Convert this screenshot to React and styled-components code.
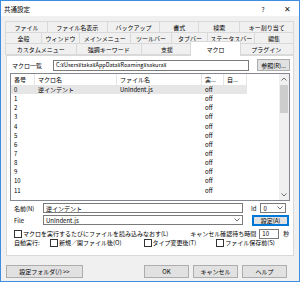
import React from 'react';
import styled, { createGlobalStyle } from 'styled-components';

const Global = createGlobalStyle`
  html, body { margin: 0; padding: 0; background: #f0f0f0; }
  body {
    font-family: "Noto Sans CJK JP", "Noto Sans", sans-serif;
    font-size: 6px;
    color: #000;
  }
`;

const Dialog = styled.div`
  width: 300px;
  height: 282px;
  box-sizing: border-box;
  border: 1px solid #3d8ee0;
  background: #f0f0f0;
  display: flex;
  flex-direction: column;
  overflow: hidden;
`;

const TitleBar = styled.div`
  height: 15px;
  background: #fff;
  display: flex;
  align-items: center;
  padding-left: 3px;
  font-size: 6.5px;
`;

const Title = styled.div`
  flex: 1;
`;

const TitleButton = styled.div`
  width: 24px;
  text-align: center;
  font-size: ${p => p.$size || 7}px;
  color: #222;
`;

const Tabs = styled.div`
  margin: 5px 5px 0;
  display: flex;
  flex-direction: column;
`;

const TabRow = styled.div`
  display: flex;
  height: 12px;
  margin-top: ${p => (p.$first ? 0 : -1)}px;
`;

const Tab = styled.div`
  flex: ${p => p.$w} 1 0;
  box-sizing: border-box;
  border: 1px solid #d9d9d9;
  margin-left: -1px;
  background: ${p => (p.$active ? '#fff' : '#f0f0f0')};
  display: flex;
  align-items: center;
  justify-content: center;
  white-space: nowrap;
  ${p =>
    p.$active &&
    `
    position: relative;
    z-index: 1;
    margin: -2px -2px -1px -3px;
    border-bottom: none;
  `}
`;

const Panel = styled.div`
  margin: 0 5px;
  height: 201px;
  box-sizing: border-box;
  background: #fff;
  border: 1px solid #d9d9d9;
  padding: 3px 3px 0 4px;
  display: flex;
  flex-direction: column;
`;

const Row = styled.div`
  display: flex;
  align-items: center;
  height: ${p => p.$h || 10}px;
  margin-top: ${p => p.$mt || 0}px;
`;

const Label = styled.div`
  width: ${p => p.$w || 'auto'};
  flex: none;
  white-space: nowrap;
  margin-left: ${p => p.$ml || 0}px;
`;

const Field = styled.div`
  box-sizing: border-box;
  height: ${p => p.$h || 10}px;
  width: ${p => p.$w}px;
  margin-left: ${p => p.$ml || 0}px;
  border: 1px solid #7a7a7a;
  background: #fff;
  display: flex;
  align-items: center;
  padding: 0 2px;
  font-size: ${p => p.$fs || 6}px;
  white-space: nowrap;
  overflow: hidden;
`;

const FieldText = styled.div`
  flex: 1;
  overflow: hidden;
`;

const Button = styled.div`
  box-sizing: border-box;
  height: ${p => p.$h || 12}px;
  width: ${p => p.$w}px;
  margin-left: ${p => p.$ml || 0}px;
  border: 1px solid ${p => (p.$default ? '#0078d7' : '#adadad')};
  box-shadow: ${p => (p.$default ? 'inset 0 0 0 1px #0078d7' : 'none')};
  background: #e1e1e1;
  display: flex;
  align-items: center;
  justify-content: center;
  white-space: nowrap;
`;

const List = styled.div`
  margin-top: 2px;
  margin-left: -1px;
  height: 128px;
  box-sizing: border-box;
  border: 1px solid #828790;
  display: flex;
`;

const ListBody = styled.div`
  flex: 1;
  display: flex;
  flex-direction: column;
`;

const HeaderRow = styled.div`
  display: flex;
  height: 11px;
  align-items: stretch;
`;

const HeaderCell = styled.div`
  width: ${p => p.$w}px;
  flex: none;
  box-sizing: border-box;
  border-right: 1px solid #e5e5e5;
  padding-left: 3px;
  display: flex;
  align-items: center;
  white-space: nowrap;
  overflow: hidden;
`;

const ItemRow = styled.div`
  display: flex;
  height: 9.15px;
  align-items: center;
  width: 236px;
  background: ${p => (p.$selected ? '#e6e6e6' : 'transparent')};
`;

const Cell = styled.div`
  width: ${p => p.$w}px;
  flex: none;
  padding-left: 3px;
  box-sizing: border-box;
  white-space: nowrap;
  overflow: hidden;
`;

const ScrollBar = styled.div`
  width: 10px;
  background: #f0f0f0;
  display: flex;
  flex-direction: column;
  align-items: center;
`;

const ScrollArrow = styled.div`
  height: 10px;
  display: flex;
  align-items: center;
  justify-content: center;
`;

const ScrollTrack = styled.div`
  flex: 1;
  width: 100%;
  display: flex;
  flex-direction: column;
`;

const Thumb = styled.div`
  margin: 0 1px;
  margin-top: 1px;
  height: 28px;
  background: #cdcdcd;
`;

const Check = styled.span`
  display: inline-block;
  width: 6px;
  height: 6px;
  border: 1px solid #333;
  background: #fff;
  margin-right: 1px;
  vertical-align: -1px;
  flex: none;
`;

const CheckLabel = styled.div`
  display: flex;
  align-items: center;
  white-space: nowrap;
  margin-left: ${p => p.$ml || 0}px;
`;

const Footer = styled.div`
  display: flex;
  align-items: center;
  padding: 9px 0 0 5px;
`;

const Chevron = ({ up }) => (
  <svg width="6" height="4" viewBox="0 0 6 4">
    <polyline
      points={up ? '0.5,3.5 3,1 5.5,3.5' : '0.5,0.5 3,3 5.5,0.5'}
      fill="none"
      stroke="#606060"
      strokeWidth="0.9"
    />
  </svg>
);

const tabRows = [
  [['ファイル', 42], ['ファイル名表示', 60], ['バックアップ', 53], ['書式', 39], ['検索', 41], ['キー割り当て', 54]],
  [['全般', 36], ['ウィンドウ', 38], ['メインメニュー', 51], ['ツールバー', 42], ['タブバー', 36], ['ステータスバー', 47], ['編集', 39]],
  [['カスタムメニュー', 70], ['強調キーワード', 65], ['支援', 50], ['マクロ', 50], ['プラグイン', 54]],
];

const cols = [
  ['番号', 24],
  ['マクロ名', 82],
  ['ファイル名', 85],
  ['実...', 22],
  ['自...', 23],
];

const rows = Array.from({ length: 12 }, (_, i) => ({
  n: i,
  name: i === 0 ? '逆インデント' : '',
  file: i === 0 ? 'UnIndent.js' : '',
}));

export default function App() {
  return (
    <>
      <Global />
      <Dialog>
        <TitleBar>
          <Title>共通設定</Title>
          <TitleButton $size={6.5}>?</TitleButton>
          <TitleButton $size={8}>✕</TitleButton>
        </TitleBar>

        <Tabs>
          {tabRows.map((r, i) => (
            <TabRow key={i} $first={i === 0}>
              {r.map(([t, w]) => (
                <Tab key={t} $w={w} $active={t === 'マクロ'}>
                  {t}
                </Tab>
              ))}
            </TabRow>
          ))}
        </Tabs>

        <Panel>
          <Row $h={12}>
            <Label $w="41px" $ml={1}>マクロ一覧</Label>
            <Field $w={197} $h={11} $fs={5.5}>
              C:¥Users¥taka¥AppData¥Roaming¥sakura¥
            </Field>
            <Button $w={33} $ml={8} $h={12}>参照(R)...</Button>
          </Row>

          <List>
            <ListBody>
              <HeaderRow>
                {cols.map(([t, w]) => (
                  <HeaderCell key={t} $w={w}>{t}</HeaderCell>
                ))}
              </HeaderRow>
              {rows.map(r => (
                <ItemRow key={r.n} $selected={r.n === 0}>
                  <Cell $w={24}>{r.n}</Cell>
                  <Cell $w={82}>{r.name}</Cell>
                  <Cell $w={85}>{r.file}</Cell>
                  <Cell $w={22}>off</Cell>
                  <Cell $w={23} />
                </ItemRow>
              ))}
            </ListBody>
            <ScrollBar>
              <ScrollArrow><Chevron up /></ScrollArrow>
              <ScrollTrack><Thumb /></ScrollTrack>
              <ScrollArrow><Chevron /></ScrollArrow>
            </ScrollBar>
          </List>

          <Row $h={10} $mt={2}>
            <Label $w="29px" $ml={3}>名前(N)</Label>
            <Field $w={200}>
              <FieldText>逆インデント</FieldText>
            </Field>
            <Label $ml={8}>Id</Label>
            <Field $w={26} $ml={4}>
              <FieldText>0</FieldText>
              <Chevron />
            </Field>
          </Row>

          <Row $h={12} $mt={1}>
            <Label $w="29px" $ml={3}>File</Label>
            <Field $w={200}>
              <FieldText>UnIndent.js</FieldText>
              <Chevron />
            </Field>
            <Button $w={37} $ml={9} $h={11} $default>設定(A)</Button>
          </Row>

          <Row $h={9} $mt={3}>
            <CheckLabel $ml={3}>
              <Check />マクロを実行するたびにファイルを読み込みなおす(L)
            </CheckLabel>
            <Label $ml={22}>キャンセル確認待ち時間</Label>
            <Field $w={20} $h={10} $ml={3}>10</Field>
            <Label $ml={4}>秒</Label>
          </Row>

          <Row $h={9}>
            <Label $w="36px" $ml={3}>自動実行:</Label>
            <CheckLabel>
              <Check />新規／開ファイル後(O)
            </CheckLabel>
            <CheckLabel $ml={22}>
              <Check />タイプ変更後(T)
            </CheckLabel>
            <CheckLabel $ml={20}>
              <Check />ファイル保存前(S)
            </CheckLabel>
          </Row>
        </Panel>

        <Footer>
          <Button $w={77} $h={13}>設定フォルダ(/) &gt;&gt;</Button>
          <Button $w={45} $h={13} $ml={61}>OK</Button>
          <Button $w={45} $h={13} $ml={4}>キャンセル</Button>
          <Button $w={45} $h={13} $ml={4}>ヘルプ</Button>
        </Footer>
      </Dialog>
    </>
  );
}
